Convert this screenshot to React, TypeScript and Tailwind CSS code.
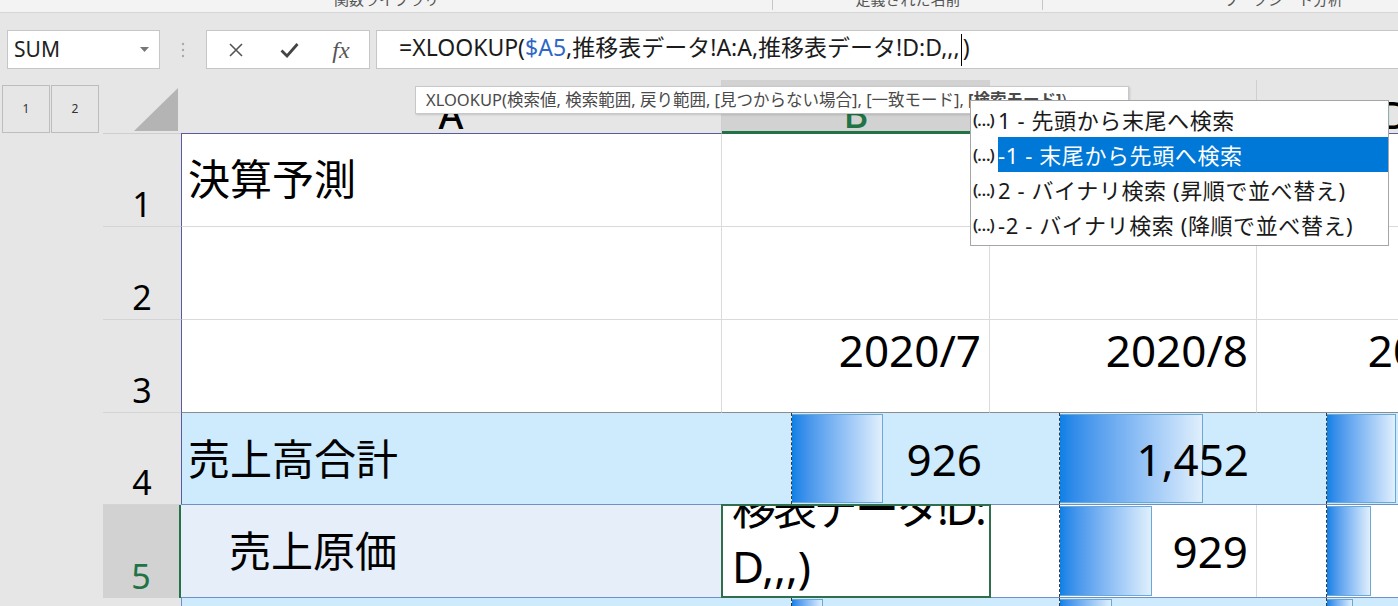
import type { ReactNode } from "react";

const ui = "font-['Noto_Sans','Noto_Sans_CJK_JP',sans-serif]";

const options = [
  { code: "1", label: "先頭から末尾へ検索", selected: false },
  { code: "-1", label: "末尾から先頭へ検索", selected: true },
  { code: "2", label: "バイナリ検索 (昇順で並べ替え)", selected: false },
  { code: "-2", label: "バイナリ検索 (降順で並べ替え)", selected: false },
];

function DataBar({ width }: { width: number }) {
  return (
    <div className="absolute inset-y-0 left-[69px] border-l border-dashed border-[#3a3a3a]">
      <div
        className="absolute bottom-[1px] left-0 top-[1px] border border-l-0 border-[#6aa8d6] bg-linear-to-r from-[#0a80e6] to-[#e0effc]"
        style={{ width }}
      />
    </div>
  );
}

function Cell({ className = "", bar, children }: { className?: string; bar?: number; children?: ReactNode }) {
  return (
    <div className={`relative flex shrink-0 items-center justify-end pr-[8px] ${className}`}>
      {bar != null && <DataBar width={bar} />}
      {children && <span className="relative text-[44px] leading-none">{children}</span>}
    </div>
  );
}

function RowHead({ n, active = false, className = "h-[93px]" }: { n: string; active?: boolean; className?: string }) {
  return (
    <div className={`flex shrink-0 ${className}`}>
      <div className="w-[103px] shrink-0" />
      <div
        className={`flex w-[78px] shrink-0 items-end justify-center pb-[5px] text-[34px] leading-none ${
          active ? "border-r-2 border-[#217346] bg-[#d2d2d2] text-[#217346]" : "border-b border-[#d4d4d4] text-black"
        }`}
      >
        {n}
      </div>
    </div>
  );
}

function RibbonEdge() {
  const groups = [
    { label: "関数ライブラリ", w: "w-[773px]" },
    { label: "定義された名前", w: "w-[270px]" },
    { label: "ワークシート分析", w: "w-[480px]" },
  ];
  return (
    <div className="flex h-[13px] overflow-hidden border-b border-[#d6d6d6] bg-[#f3f3f3]">
      {groups.map((g, i) => (
        <div key={g.label} className={`relative flex shrink-0 justify-center ${g.w}`}>
          <span className="-mt-[9px] text-[15px] leading-[16px] text-[#555]">{g.label}</span>
          {i < 2 && <span className="absolute right-0 top-0 h-[10px] w-px bg-[#c6c6c6]" />}
        </div>
      ))}
    </div>
  );
}

function FormulaBar() {
  return (
    <div className="flex h-[67px] items-start pt-[17px]">
      <div className="ml-[7px] flex h-[39px] w-[153px] items-center justify-between border border-[#c6c6c6] bg-white pl-[6px] pr-[10px]">
        <span className="text-[21px] leading-none text-[#222]">SUM</span>
        <svg width="9" height="5" viewBox="0 0 9 5">
          <path d="M0 0h9L4.5 5z" fill="#777" />
        </svg>
      </div>
      <div className="flex h-[39px] w-[46px] items-center justify-center">
        <svg width="4" height="16" viewBox="0 0 4 16">
          <circle cx="2" cy="2" r="1.2" fill="#a8a8a8" />
          <circle cx="2" cy="8" r="1.2" fill="#a8a8a8" />
          <circle cx="2" cy="14" r="1.2" fill="#a8a8a8" />
        </svg>
      </div>
      <div className="flex h-[39px] w-[164px] items-center border border-[#c6c6c6] bg-white">
        <div className="flex w-[56px] justify-center pl-[2px]">
          <svg width="16" height="16" viewBox="0 0 16 16">
            <path d="M2 2l12 12M14 2L2 14" stroke="#555" strokeWidth="1.6" fill="none" />
          </svg>
        </div>
        <div className="flex w-[52px] justify-center">
          <svg width="19" height="16" viewBox="0 0 19 16">
            <path d="M1.5 8.5l5.5 5.5L17.5 2" stroke="#444" strokeWidth="2.8" fill="none" />
          </svg>
        </div>
        <div className="flex w-[52px] justify-center font-['Liberation_Serif',serif] text-[24px] italic leading-none text-[#555]">
          fx
        </div>
      </div>
      <div className="ml-[6px] flex h-[39px] flex-1 items-center border border-r-0 border-[#c6c6c6] bg-white pl-[22px]">
        <span className="whitespace-nowrap text-[23px] leading-none text-[#1b1b1b]">
          =XLOOKUP(<span className="text-[#2e67c6]">$A5</span>,推移表データ!A:A,推移表データ!D:D,,,
          <span className="mx-px inline-block h-[32px] w-px bg-black align-middle" />)
        </span>
      </div>
    </div>
  );
}

function HeaderRow() {
  return (
    <div className="flex h-[54px]">
      <div className="flex w-[103px] shrink-0 gap-px pl-[2px] pt-[5px]">
        {["1", "2"].map((n) => (
          <div key={n} className="flex h-[48px] w-[48px] items-center justify-center border border-[#bdbdbd] text-[12px] text-[#333]">
            {n}
          </div>
        ))}
      </div>
      <div className="relative w-[78px] shrink-0 border-b border-[#cfcfcf]">
        <svg className="absolute left-0 top-0" width="78" height="53" viewBox="0 0 78 53">
          <path d="M75 8V51H31z" fill="#b4b4b4" />
        </svg>
      </div>
      <div className="flex w-[541px] shrink-0 items-end justify-center border-b border-r border-[#5a5a9e] border-r-[#cfcfcf] text-[38px] font-medium leading-[38px]">
        A
      </div>
      <div className="flex w-[268px] shrink-0 items-end justify-center border-b-[3px] border-[#217346] bg-[#d2d2d2] pt-[5px] text-[38px] font-medium leading-[36px] text-[#217346]">
        B
      </div>
      <div className="flex w-[267px] shrink-0 items-end justify-center border-b border-r border-[#5a5a9e] border-r-[#cfcfcf] text-[38px] font-medium leading-[38px]">
        C
      </div>
      <div className="flex w-[267px] shrink-0 items-end justify-start border-b border-[#5a5a9e] pl-[124px] text-[38px] font-medium leading-[38px]">
        D
      </div>
    </div>
  );
}

function Sheet() {
  return (
    <div className="flex">
      <div className="flex shrink-0 flex-col">
        <RowHead n="1" />
        <RowHead n="2" />
        <RowHead n="3" />
        <RowHead n="4" className="h-[92px]" />
        <RowHead n="5" active />
        <RowHead n="6" />
      </div>
      <div className="flex shrink-0 flex-col">
        {/* row 1 */}
        <div className="flex h-[93px] bg-white">
          <div className="flex w-[541px] shrink-0 items-center border-b border-l border-r border-[#dadada] border-l-[#5a5a9e] pb-[2px] pl-[6px] text-[42px] leading-none">
            決算予測
          </div>
          <Cell className="w-[268px] border-b border-r border-[#dadada]" />
          <Cell className="w-[267px] border-b border-r border-[#dadada]" />
          <Cell className="relative w-[267px] border-b border-[#dadada]">
            <span className="absolute left-[133px] top-[5px] h-[28px] w-[12px] border border-[#bdbdbd] bg-white" />
          </Cell>
        </div>
        {/* row 2 */}
        <div className="flex h-[93px] bg-white">
          <div className="w-[541px] shrink-0 border-b border-l border-r border-[#dadada] border-l-[#5a5a9e]" />
          <Cell className="w-[268px] border-b border-r border-[#dadada]" />
          <Cell className="w-[267px] border-b border-r border-[#dadada]" />
          <Cell className="w-[267px] border-b border-[#dadada]" />
        </div>
        {/* row 3 */}
        <div className="flex h-[93px] bg-white">
          <div className="w-[541px] shrink-0 border-b border-l border-r border-[#dadada] border-b-[#8c8c8c] border-l-[#5a5a9e]" />
          <Cell className="w-[268px] border-b border-r border-[#dadada] border-b-[#8c8c8c] pb-[32px]">2020/7</Cell>
          <Cell className="w-[267px] border-b border-r border-[#dadada] border-b-[#8c8c8c] pb-[32px]">2020/8</Cell>
          <Cell className="w-[267px] border-b border-[#8c8c8c] pb-[32px] pr-[14px]">2020/9</Cell>
        </div>
        {/* row 4 */}
        <div className="flex h-[92px] border-b border-[#6f90c6] bg-[#cdebfc]">
          <div className="flex w-[541px] shrink-0 items-center border-l border-[#5a5a9e] pl-[6px] text-[42px] leading-none">
            売上高合計
          </div>
          <Cell className="w-[268px]" bar={91}>926</Cell>
          <Cell className="w-[267px]" bar={143}>1,452</Cell>
          <Cell className="w-[267px]" bar={69}>1,288</Cell>
        </div>
        {/* row 5 */}
        <div className="flex h-[93px] border-b border-[#6f90c6] bg-white">
          <div className="flex w-[541px] shrink-0 items-center bg-[#e6eef9] pl-[48px] text-[42px] leading-none">
            売上原価
          </div>
          <div className="relative w-[268px] shrink-0">
            <div className="absolute -bottom-[1px] -left-[1px] -right-[1px] -top-[1px] z-10 overflow-hidden border-2 border-[#2f6f4e] bg-white pl-[9px]">
              <div className="-mt-[27px] whitespace-nowrap text-[44px] leading-[58px]">
                <div className="tracking-[-3px]">移表データ!D:</div>
                <div>D,,,)</div>
              </div>
            </div>
          </div>
          <Cell className="w-[267px] border-r border-[#dadada]" bar={92}>929</Cell>
          <Cell className="w-[267px]" bar={44}>808</Cell>
        </div>
        {/* row 6 */}
        <div className="flex h-[93px] bg-[#cdebfc]">
          <div className="w-[541px] shrink-0 border-l border-[#6f90c6]" />
          <Cell className="w-[268px]" bar={31} />
          <Cell className="w-[267px]" bar={52} />
          <Cell className="w-[267px]" bar={26} />
        </div>
      </div>
    </div>
  );
}

function ArgTooltip() {
  return (
    <div className="absolute left-[415px] top-[86px] z-20 flex h-[28px] w-[714px] items-center overflow-hidden whitespace-nowrap border border-[#c8c8c8] bg-white pl-[10px] text-[16.5px] leading-none text-[#4a4a4a] shadow-[1px_1px_2px_rgba(0,0,0,0.15)]">
      XLOOKUP(検索値, 検索範囲, 戻り範囲, [見つからない場合], [一致モード], <span className="ml-[4px] font-bold">[検索モード]</span>)
    </div>
  );
}

function ModeDropdown() {
  return (
    <div className="absolute left-[970px] top-[100px] z-30 h-[146px] w-[419px] border border-[#a6a6a6] bg-white pt-[1px]">
      {options.map((o) => (
        <div key={o.code} className="flex h-[35px] items-center">
          <span className="w-[27px] shrink-0 pl-[2px] text-[16px] font-semibold tracking-[-1px] text-[#222]">(…)</span>
          <span
            className={`flex h-full flex-1 items-center whitespace-nowrap text-[22px] leading-none tracking-[0.6px] ${
              o.selected ? "bg-[#0078d7] text-white" : "text-[#1a1a1a]"
            }`}
          >
            {o.code}&nbsp;-&nbsp;{o.label}
          </span>
        </div>
      ))}
    </div>
  );
}

export default function App() {
  return (
    <div className={`relative h-[606px] w-[1398px] overflow-hidden bg-[#e6e6e6] text-black ${ui}`}>
      <RibbonEdge />
      <FormulaBar />
      <HeaderRow />
      <Sheet />
      <ArgTooltip />
      <ModeDropdown />
    </div>
  );
}
